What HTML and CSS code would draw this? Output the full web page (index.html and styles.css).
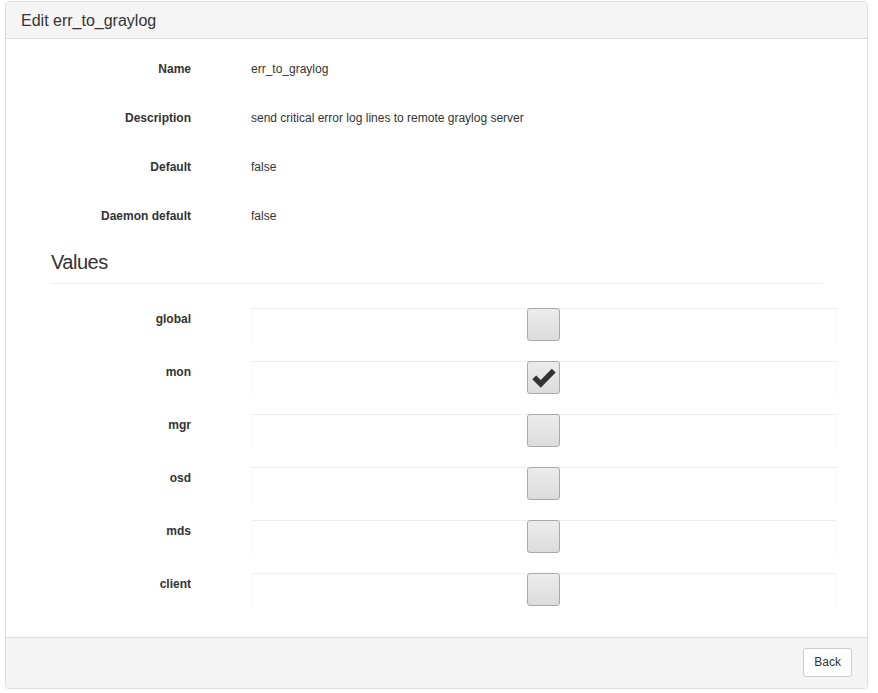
FILE: index.html
```html
<!DOCTYPE html>
<html>
	<head>
		<meta charset="utf-8">
		<title>Edit err_to_graylog</title>
		<link rel="stylesheet" href="styles.css">
	</head>
	<body>
		<section class="panel">
			<header class="panel-heading">Edit err_to_graylog</header>

			<div class="panel-body">
				<dl class="details">
					<dt>Name</dt>
					<dd>err_to_graylog</dd>
					<dt>Description</dt>
					<dd>send critical error log lines to remote graylog server</dd>
					<dt>Default</dt>
					<dd>false</dd>
					<dt>Daemon default</dt>
					<dd>false</dd>
				</dl>

				<h3 class="section-title">Values</h3>

				<form class="values">
					<label class="value-row">
						<span class="value-name">global</span>
						<span class="value-box"><span class="check"></span></span>
					</label>
					<label class="value-row">
						<span class="value-name">mon</span>
						<span class="value-box">
							<span class="check checked">
								<svg viewBox="0 0 24 24" width="26" height="26" aria-hidden="true">
									<path d="M1.2 13.2 4.8 9.6 9 13.8 19.2 3.4 22.8 7 9 21z" fill="#333"/>
								</svg>
							</span>
						</span>
					</label>
					<label class="value-row">
						<span class="value-name">mgr</span>
						<span class="value-box"><span class="check"></span></span>
					</label>
					<label class="value-row">
						<span class="value-name">osd</span>
						<span class="value-box"><span class="check"></span></span>
					</label>
					<label class="value-row">
						<span class="value-name">mds</span>
						<span class="value-box"><span class="check"></span></span>
					</label>
					<label class="value-row">
						<span class="value-name">client</span>
						<span class="value-box"><span class="check"></span></span>
					</label>
				</form>
			</div>

			<footer class="panel-footer">
				<button type="button" class="btn">Back</button>
			</footer>
		</section>
	</body>
</html>
```

FILE: styles.css
```css
:root {
	box-sizing: border-box;
}

*, *::before, *::after {
	box-sizing: inherit;
}

body {
	margin: 0;
	font-family: "Liberation Sans", Arial, sans-serif;
	font-size: 12px;
	line-height: 17px;
	color: #333;
	background: #fff;
}

.panel {
	margin: 1px 10px 0 5px;
	border: 1px solid #ddd;
	border-radius: 4px;
	box-shadow: 0 1px 1px rgba(0, 0, 0, 0.05);
}

.panel-heading {
	height: 37px;
	padding: 9px 15px 0;
	font-size: 16px;
	line-height: 19px;
	background: #f5f5f5;
	border-bottom: 1px solid #ddd;
	border-radius: 3px 3px 0 0;
}

.panel-body {
	padding: 22px 30px 30px 15px;
}

.details {
	display: grid;
	grid-template-columns: 170px 1fr;
	column-gap: 60px;
	row-gap: 32px;
	margin: 0;

	& > dt {
		font-weight: bold;
		text-align: right;
	}

	& > dd {
		margin: 0;
	}
}

.section-title {
	margin: 25px 0 0 30px;
	padding-bottom: 9px;
	font-size: 20px;
	line-height: 24px;
	font-weight: normal;
	letter-spacing: -0.5px;
	width: 771px;
	border-bottom: 1px solid #eee;
}

.values {
	display: flex;
	flex-direction: column;
	gap: 19px;
	margin-top: 24px;
}

.value-row {
	display: grid;
	grid-template-columns: 170px 1fr;
	column-gap: 60px;
}

.value-name {
	padding-top: 3px;
	font-weight: bold;
	text-align: right;
}

.value-box {
	display: flex;
	justify-content: center;
	height: 34px;
	padding-right: 1px;
	border-top: 1px solid #eee;
	border-left: 1px solid #f6f6f6;
	border-right: 1px solid #f6f6f6;
}

.check {
	display: flex;
	align-items: center;
	justify-content: center;
	width: 33px;
	height: 33px;
	margin-top: -1px;
	border: 1px solid #a9a9a9;
	border-radius: 3px;
	background: linear-gradient(#ececec, #dcdcdc);
}

.panel-footer {
	display: flex;
	justify-content: flex-end;
	padding: 10px 15px 11px;
	background: #f4f4f4;
	border-top: 1px solid #ddd;
	border-radius: 0 0 3px 3px;
}

.btn {
	height: 29px;
	padding: 5px 10px;
	font: inherit;
	color: #333;
	background: #fff;
	border: 1px solid #ccc;
	border-radius: 3px;
}
```
